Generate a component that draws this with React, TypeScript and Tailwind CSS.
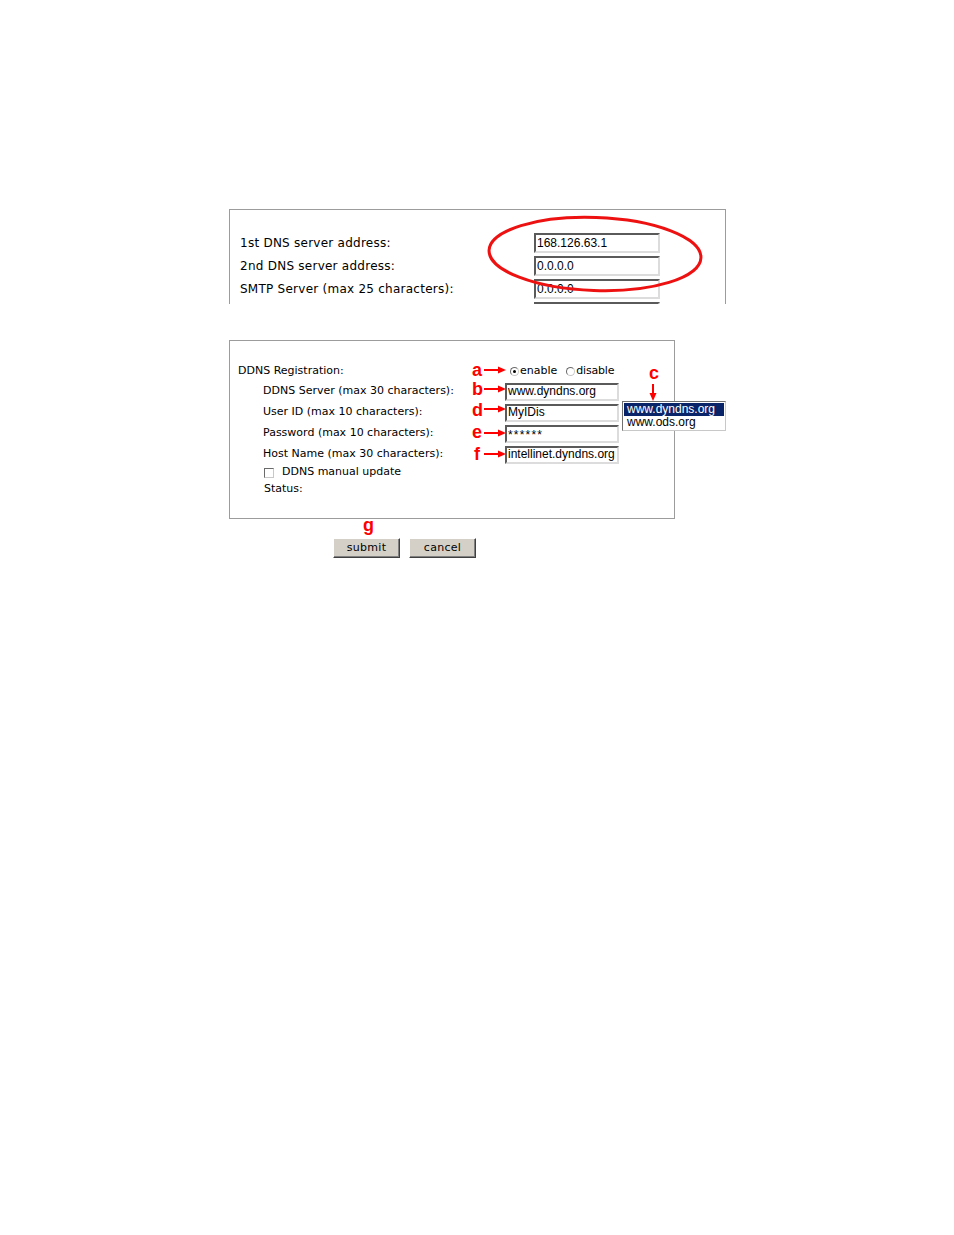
import React from 'react';

const labelFont = "font-['DejaVu_Sans',sans-serif]";
const fieldFont = "font-['Liberation_Sans',Arial,sans-serif]";

function Field({ value, width, height, extra = '' }: { value: string; width: string; height: string; extra?: string }) {
  return (
    <div
      className={`${width} ${height} ${fieldFont} ${extra} flex items-center overflow-hidden whitespace-nowrap border-2 border-t-[#5a5a5a] border-l-[#5a5a5a] border-r-[#dcdcdc] border-b-[#dcdcdc] bg-white pb-px pl-px text-[12px] leading-none text-black`}
    >
      {value}
    </div>
  );
}

function Radio({ checked }: { checked?: boolean }) {
  return (
    <span className="flex h-[9px] w-[9px] items-center justify-center rounded-full border border-t-[#6a6a6a] border-l-[#6a6a6a] border-r-[#c8c8c8] border-b-[#c8c8c8] bg-white">
      {checked && <span className="h-[3px] w-[3px] rounded-full bg-black" />}
    </span>
  );
}

function Button({ children }: { children: React.ReactNode }) {
  return (
    <div className="flex h-[20px] w-[67px] items-center justify-center border border-t-white border-l-white border-r-[#404040] border-b-[#404040] bg-[#d4d0c8] text-[11px] tracking-[0.3px] text-black shadow-[inset_-1px_-1px_0_#808080]">
      {children}
    </div>
  );
}

const dnsRows = [
  { label: '1st DNS server address:', value: '168.126.63.1' },
  { label: '2nd DNS server address:', value: '0.0.0.0' },
  { label: 'SMTP Server (max 25 characters):', value: '0.0.0.0' },
  { label: '', value: '' },
];

const ddnsRows = [
  { label: 'DDNS Server (max 30 characters):', value: 'www.dyndns.org' },
  { label: 'User ID (max 10 characters):', value: 'MyIDis' },
  { label: 'Password (max 10 characters):', value: '******', extra: 'tracking-[1.2px] pt-[4px]' },
  { label: 'Host Name (max 30 characters):', value: 'intellinet.dyndns.org' },
];

// annotation letters, page coordinates
const marks = [
  { ch: 'a', cls: 'left-[472px] top-[361px]' },
  { ch: 'b', cls: 'left-[472px] top-[380px]' },
  { ch: 'd', cls: 'left-[472px] top-[401px]' },
  { ch: 'e', cls: 'left-[472px] top-[423px]' },
  { ch: 'f', cls: 'left-[474px] top-[445px]' },
  { ch: 'c', cls: 'left-[649px] top-[364px]' },
  { ch: 'g', cls: 'left-[363px] top-[516px]' },
];

const arrowYs = [370, 389, 409, 433, 454];

export default function App() {
  return (
    <div className={`relative h-[1235px] w-[954px] bg-white text-black ${labelFont}`}>
      <div className="pl-[229px] pt-[209px]">
        {/* DNS panel (cropped at the bottom) */}
        <div className="h-[95px] w-[497px] overflow-hidden border-x border-t border-[#9c9c9c] pt-[23px]">
          <div className="flex flex-col gap-[3px]">
            {dnsRows.map((r, i) => (
              <div key={i} className="flex h-[20px] items-center">
                <div className="w-[304px] pl-[10px] text-[12px] tracking-[0.25px]">{r.label}</div>
                <Field value={r.value} width="w-[126px]" height="h-[20px]" />
              </div>
            ))}
          </div>
        </div>

        {/* DDNS panel */}
        <div className="mt-[36px] h-[179px] w-[446px] border border-[#9c9c9c] pt-[20px] text-[11px]">
          <div className="flex h-[20px] items-center">
            <div className="w-[275px] pl-[8px]">DDNS Registration:</div>
            <div className="flex items-center pl-[5px]">
              <Radio checked />
              <span className="ml-px">enable</span>
              <span className="ml-[9px]">
                <Radio />
              </span>
              <span className="ml-px tracking-[-0.2px]">disable</span>
            </div>
          </div>
          {ddnsRows.map((r) => (
            <div key={r.label} className="flex h-[21px] items-center">
              <div className="w-[275px] pl-[33px]">{r.label}</div>
              <Field value={r.value} width="w-[114px]" height="h-[18px]" extra={r.extra} />
            </div>
          ))}
          <div className="flex h-[15px] items-center pl-[34px]">
            <span className="h-[10px] w-[10px] border border-t-[#6a6a6a] border-l-[#6a6a6a] border-r-[#c8c8c8] border-b-[#c8c8c8] bg-white" />
            <span className="ml-[8px]">DDNS manual update</span>
          </div>
          <div className="flex h-[18px] items-center pl-[34px]">Status:</div>
        </div>

        <div className="mt-[19px] flex gap-[9px] pl-[104px]">
          <Button>submit</Button>
          <Button>cancel</Button>
        </div>
      </div>

      {/* server drop-down list */}
      <div className="absolute left-[622px] top-[401px] w-[104px] border border-t-[#707070] border-l-[#707070] border-r-[#c8c8c8] border-b-[#c8c8c8] bg-white p-px text-[12px] leading-[13px] font-['Liberation_Sans',Arial,sans-serif]">
        <div className="bg-[#0a246a] pl-[3px] text-white">www.dyndns.org</div>
        <div className="pl-[3px] text-black">www.ods.org</div>
      </div>

      {/* red annotations */}
      <svg className="pointer-events-none absolute left-0 top-0" width="954" height="1235">
        <ellipse
          cx="595"
          cy="254"
          rx="106"
          ry="36.5"
          transform="rotate(2 595 254)"
          fill="none"
          stroke="#ee1111"
          strokeWidth="3"
        />
        {arrowYs.map((y) => (
          <g key={y}>
            <line x1="484" y1={y} x2="499" y2={y} stroke="#ff0000" strokeWidth="2" />
            <polygon points={`498,${y - 3.5} 506,${y} 498,${y + 3.5}`} fill="#ff0000" />
          </g>
        ))}
        <line x1="653" y1="384" x2="653" y2="394" stroke="#ff0000" strokeWidth="2" />
        <polygon points="649.5,393 653,401 656.5,393" fill="#ff0000" />
      </svg>
      {marks.map((m) => (
        <span
          key={m.ch}
          className={`absolute ${m.cls} font-['Liberation_Sans',Arial,sans-serif] text-[18px] font-bold leading-[18px] text-[#ff0000]`}
        >
          {m.ch}
        </span>
      ))}
    </div>
  );
}
